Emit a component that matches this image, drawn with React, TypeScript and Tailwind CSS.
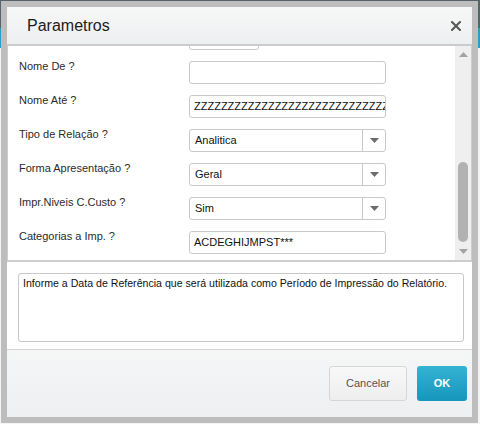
import React from "react";

type Field =
  | { kind: "text"; label: string; value: string; width?: number }
  | { kind: "select"; label: string; value: string };

const fields: Field[] = [
  { kind: "text", label: "", value: "", width: 70 },
  { kind: "text", label: "Nome De ?", value: "" },
  { kind: "text", label: "Nome Até ?", value: "Z".repeat(40) },
  { kind: "select", label: "Tipo de Relação ?", value: "Analitica" },
  { kind: "select", label: "Forma Apresentação ?", value: "Geral" },
  { kind: "select", label: "Impr.Niveis C.Custo ?", value: "Sim" },
  { kind: "text", label: "Categorias a Imp. ?", value: "ACDEGHIJMPST***" },
];

function Caret({ up = false, color = "#6b6b6b" }: { up?: boolean; color?: string }) {
  return (
    <svg width="9" height="5" viewBox="0 0 9 5" className="block">
      <polygon points={up ? "0,5 9,5 4.5,0" : "0,0 9,0 4.5,5"} fill={color} />
    </svg>
  );
}

function FieldRow({ field }: { field: Field }) {
  return (
    <div className="flex h-[23px] shrink-0 items-start">
      <div className="mt-[-1px] w-[181px] shrink-0 pl-[11px] text-[11px] leading-[13px] text-[#2b2b2b]">
        {field.label}
      </div>
      {field.kind === "text" ? (
        <div
          className="flex h-[23px] items-center overflow-hidden whitespace-nowrap rounded-[3px] border border-[#c9c9c9] bg-white pl-[4px] text-[11px] leading-[13px] text-[#111]"
          style={{ width: field.width ?? 197 }}
        >
          {field.value}
        </div>
      ) : (
        <div className="flex h-[23px] w-[197px] items-stretch rounded-[3px] border border-[#c9c9c9] bg-white text-[11px] leading-[13px] text-[#111]">
          <div className="flex flex-1 items-center pl-[5px]">{field.value}</div>
          <div className="flex w-[23px] items-center justify-center border-l border-[#c9c9c9]">
            <Caret />
          </div>
        </div>
      )}
    </div>
  );
}

export default function App() {
  return (
    <div
      className="relative h-[424px] w-[480px] overflow-hidden bg-[#f2f2f2]"
      style={{ fontFamily: '"Liberation Sans", Arial, sans-serif' }}
    >
      {/* page behind the modal */}
      <div className="flex flex-col">
        <div className="h-[28px] bg-[#56636b]" />
        <div className="h-[20px] bg-[#2a9fc4]" />
        <div className="h-[376px] bg-[#f4f4f4]" />
      </div>

      {/* modal window */}
      <div className="absolute left-[1px] top-[1px] flex h-[422px] w-[477px] flex-col border-[6px] border-[#bdbdbd]">
        {/* title bar */}
        <div className="flex h-[39px] shrink-0 items-center justify-between border-b-2 border-[#cbcbcb] bg-gradient-to-b from-[#f6f7f7] to-[#eeeff0] pl-[20px] pr-[11px]">
          <span className="text-[16px] leading-[18px] text-[#1c1c1c]">Parametros</span>
          <svg width="10" height="10" viewBox="0 0 10 10">
            <path d="M1 1 L9 9 M9 1 L1 9" stroke="#555" strokeWidth="2" strokeLinecap="square" />
          </svg>
        </div>

        {/* parameter list with scrollbar */}
        <div className="flex h-[216px] shrink-0 border-x border-b-2 border-[#cdcdcd] bg-white">
          <div className="flex-1 overflow-hidden">
            <div className="mt-[-19px] flex flex-col gap-[11px]">
              {fields.map((f, i) => (
                <FieldRow key={i} field={f} />
              ))}
            </div>
          </div>
          <div className="flex w-[16px] shrink-0 flex-col items-center bg-[#efefef] pb-[6px] pt-[6px]">
            <Caret up color="#a3a3a3" />
            <div className="flex-1" />
            <div className="mb-[7px] h-[80px] w-[10px] rounded-full bg-[#b2b2b2]" />
            <Caret color="#a3a3a3" />
          </div>
        </div>

        {/* help text */}
        <div className="flex h-[87px] shrink-0 bg-white pb-[7px] pl-[11px] pr-[8px] pt-[11px]">
          <div className="flex-1 whitespace-nowrap rounded-[3px] border border-[#c8c8c8] px-[4px] pt-[3px] text-[10.6px] leading-[13px] text-[#111]">
            Informe a Data de Referência que será utilizada como Período de Impressão do Relatório.
          </div>
        </div>

        {/* footer buttons */}
        <div className="flex flex-1 items-center justify-end gap-[10px] border-t border-[#d4d4d4] bg-gradient-to-b from-[#f5f6f6] to-[#eeeff1] pr-[5px]">
          <button className="h-[35px] w-[78px] rounded-[3px] border border-[#d6d6d6] bg-gradient-to-b from-[#f8f8f8] to-[#eeeeee] text-[11px] text-[#555]">
            Cancelar
          </button>
          <button className="h-[35px] w-[50px] rounded-[3px] bg-gradient-to-b from-[#34b3d3] to-[#1596bd] text-[11px] font-bold text-white">
            OK
          </button>
        </div>
      </div>
    </div>
  );
}
